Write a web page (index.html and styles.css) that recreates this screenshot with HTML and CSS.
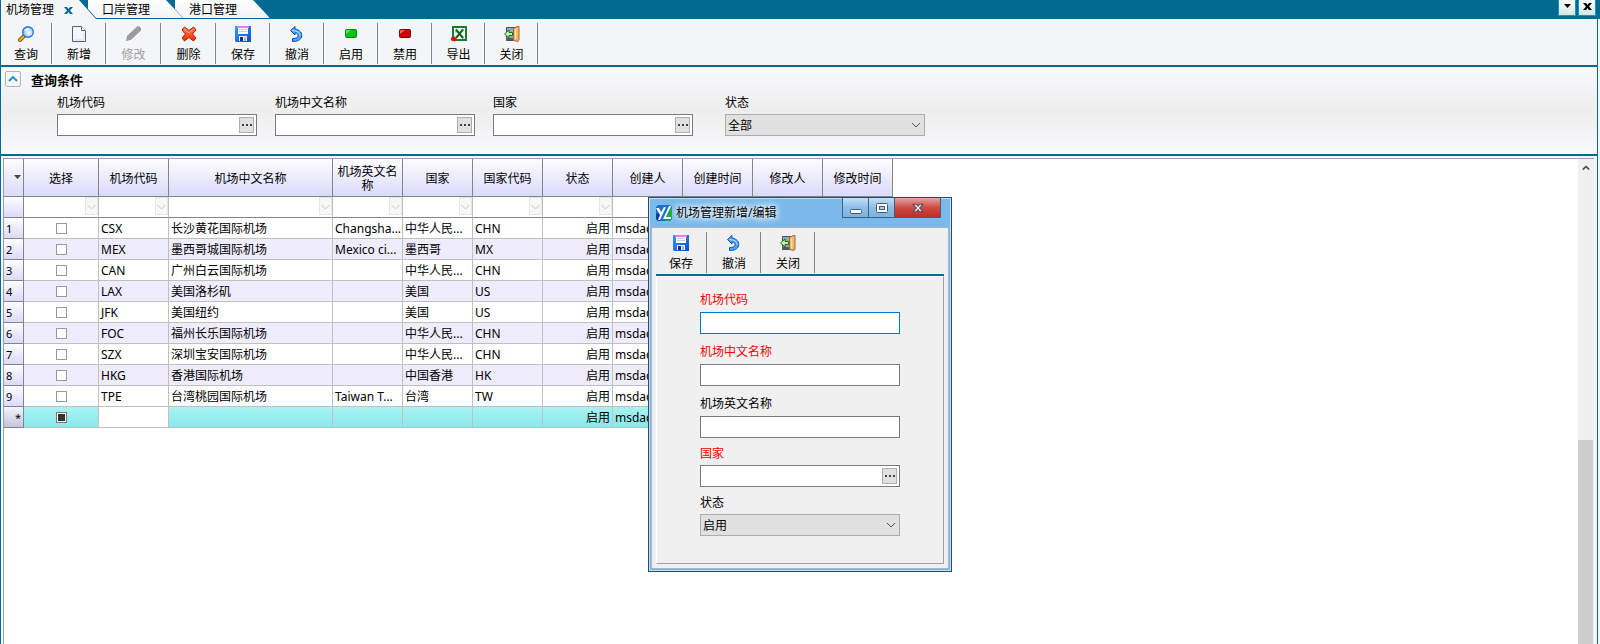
FILE: index.html
```html
<!DOCTYPE html>
<html lang="zh-CN">
  <head>
    <meta charset="UTF-8" />
    <meta name="viewport" content="width=device-width, initial-scale=1.0" />
    <title>机场管理</title>
    <link rel="stylesheet" href="styles.css">
  </head>
  <body>
    <!-- Shared icons -->
    <svg class="sprite" aria-hidden="true">
      <defs>
        <linearGradient id="blueFill" x1="0" y1="0" x2="1" y2="1">
          <stop offset="0" stop-color="#2f9bff" />
          <stop offset="1" stop-color="#0a4fd0" />
        </linearGradient>
        <linearGradient id="redFill" x1="0" y1="0" x2="0" y2="1">
          <stop offset="0" stop-color="#ff7a50" />
          <stop offset="1" stop-color="#f03000" />
        </linearGradient>
        <radialGradient id="lens" cx="0.6" cy="0.6" r="0.7">
          <stop offset="0" stop-color="#ffffff" />
          <stop offset="1" stop-color="#5cb4f4" />
        </radialGradient>
      </defs>
      <symbol id="icon-search" viewBox="0 0 16 16">
        <path d="M6.500 9.500L2 14" stroke="#8a6208" stroke-width="4" stroke-linecap="round" />
        <path d="M5.500 10.500L2 14" stroke="#e6b32e" stroke-width="2" stroke-linecap="round" />
        <circle cx="10" cy="6" r="5.300" fill="url(#lens)" stroke="#2a78d8" stroke-width="1.400" />
        <path d="M7 5c1-2 3-2 4-2" stroke="#fff" stroke-width="1.300" fill="none" />
      </symbol>
      <symbol id="icon-new" viewBox="0 0 16 16">
        <path d="M1.500.500h9l4 4v11h-13z" fill="#f3f6fd" stroke="#5a6070" />
        <path d="M10.500.500v4h4" fill="#fff" stroke="#5a6070" />
        <path d="M3 14h10V7" fill="none" stroke="#d8dfee" />
      </symbol>
      <symbol id="icon-edit" viewBox="0 0 16 16">
        <path d="M1 16l1-5 10-10c2-1 4 1 4 4L6 15z" fill="#fff" />
        <path d="M0 15l1-5L11 .500c2-1 5 1 4 4L5 14z" fill="#9c9c9c" />
      </symbol>
      <symbol id="icon-delete" viewBox="0 0 16 16">
        <path d="M3.500 1L8 4.500 12.500 1l2.500 3-3.500 4 3.500 4-2.500 3L8 11.500 3.500 15 1 12l3.500-4L1 4z" fill="url(#redFill)" stroke="#b01800" stroke-linejoin="round" />
        <path d="M3.500 3.500L8 7l4-3.500" stroke="#ffb090" fill="none" />
      </symbol>
      <symbol id="icon-save" viewBox="0 0 16 16">
        <path d="M0 0h16v16H1l-1-1z" fill="url(#blueFill)" />
        <path d="M3 0h10v8H3z" fill="#fff" />
        <path d="M2 0h12v2H2z" fill="#e47af4" />
        <path d="M4 3.500h8M4 5.500h8" stroke="#c4cee0" />
        <path d="M4 10h8v5H4z" fill="#eaf1fc" />
        <path d="M5 11h3v4H5z" fill="#0b2f8c" />
        <path d="M9 11h2v4H9z" fill="#a9b8d0" />
      </symbol>
      <symbol id="icon-undo" viewBox="0 0 16 16">
        <path d="M1.500 4.500L6 .500v2.500c5 1 7.500 4 6.500 8-1 3-4 4.500-9 4.500v-3c4 0 5.500-1 5.500-3s-1-2.500-3-2.500v2z" fill="#4ea6fa" stroke="#0a4fc4" stroke-linejoin="round" />
        <path d="M3.500 4.500c5 .5 7.500 2 7.500 5" fill="none" stroke="#c4e8ff" />
      </symbol>
      <symbol id="icon-enable" viewBox="0 0 16 16">
        <rect x="2.500" y="3.500" width="11" height="8" rx="1" fill="#00c410" stroke="#008a08" />
        <path d="M3 8l5-4H4L3 5z" fill="#5ae860" />
      </symbol>
      <symbol id="icon-disable" viewBox="0 0 16 16">
        <rect x="2.500" y="3.500" width="11" height="8" rx="1" fill="#cc0404" stroke="#860000" />
        <path d="M3 8l5-4H4L3 5z" fill="#f86060" />
      </symbol>
      <symbol id="icon-export" viewBox="0 0 16 16">
        <path d="M2 1h13v13H2z" fill="#f4faf4" stroke="#1c7a34" stroke-width="2" />
        <path d="M4 4h2M4 6h2M11 12h2M11 4h2" stroke="#7ab886" />
        <path d="M5 3.500l7 8.500M12 3.500L5 12" stroke="#146428" stroke-width="2" />
        <path d="M0 11.500h3V10l3 3-3 3v-1.500H0z" fill="#f00" />
      </symbol>
      <symbol id="icon-exit" viewBox="0 0 16 16">
        <path d="M2.500 1.500h9v13h-9z" fill="#8faabb" stroke="#4a5058" />
        <path d="M2 12h8v2H2z" fill="#505c66" />
        <path d="M9.500 2.500l5-2.500.500 1v13l-1 1.500-4.500-1z" fill="#f2b878" stroke="#a86824" />
        <path d="M11.500 3v10" stroke="#ffe0b8" />
        <path d="M12 7h1v3h-1z" fill="#ffd800" />
        <path d="M.500 8L5 4v2.500h3.500v3H5V12z" fill="#c8f4b8" stroke="#187018" />
      </symbol>
      <symbol id="icon-chevron-up" viewBox="0 0 10 6">
        <path d="M1 5l4-4 4 4" fill="none" stroke="currentColor" stroke-width="2" />
      </symbol>
      <symbol id="icon-x" viewBox="0 0 9 7">
        <path d="M0 0h3l1.500 2L6 0h3L6 3.500 9 7H6L4.500 5 3 7H0l3-3.500z" fill="currentColor" />
      </symbol>
      <symbol id="icon-caret" viewBox="0 0 7 4">
        <path d="M0 0h7L3.500 4z" fill="currentColor" />
      </symbol>
      <symbol id="icon-logo" viewBox="0 0 16 16">
        <path d="M2 0h12l2 2v12l-2 2H2l-2-2V2z" fill="#1472d0" />
        <path d="M14 1l2 1v12l-2 2H9z" fill="#1fa04a" />
        <path d="M0 9l5-2-1 9H2l-2-2z" fill="#0a3f94" />
        <path d="M0 3h3l2 4 3-5h2L4 15H2l2-5z" fill="#fff" />
        <path d="M13 1h2L10 12h5v2H7z" fill="#fff" />
      </symbol>
    </svg>

    <div class="tab-bar">
      <div class="tabs">
        <div class="tab active">
          <button type="button" class="tab-name">机场管理</button>
          <button type="button" class="tab-close" aria-label="关闭标签"><svg width="9" height="7"><use href="#icon-x" /></svg></button>
        </div>
        <div class="tab second"><button type="button" class="tab-name">口岸管理</button></div>
        <div class="tab third"><button type="button" class="tab-name">港口管理</button></div>
      </div>
      <div class="tab-tools">
        <button type="button" aria-label="标签列表"><svg width="7" height="4"><use href="#icon-caret" /></svg></button>
        <button type="button" aria-label="关闭"><svg width="9" height="7"><use href="#icon-x" /></svg></button>
      </div>
    </div>

    <main class="page">
      <div class="toolbar">
        <button type="button"><svg width="16" height="16"><use href="#icon-search" /></svg>查询</button>
        <button type="button"><svg width="16" height="16"><use href="#icon-new" /></svg>新增</button>
        <button type="button" class="wide" disabled><svg width="16" height="16"><use href="#icon-edit" /></svg>修改</button>
        <button type="button" class="wide"><svg width="16" height="16"><use href="#icon-delete" /></svg>删除</button>
        <button type="button"><svg width="16" height="16"><use href="#icon-save" /></svg>保存</button>
        <button type="button"><svg width="16" height="16"><use href="#icon-undo" /></svg>撤消</button>
        <button type="button"><svg width="16" height="16"><use href="#icon-enable" /></svg>启用</button>
        <button type="button"><svg width="16" height="16"><use href="#icon-disable" /></svg>禁用</button>
        <button type="button" class="narrow"><svg width="16" height="16"><use href="#icon-export" /></svg>导出</button>
        <button type="button" class="narrow"><svg width="16" height="16"><use href="#icon-exit" /></svg>关闭</button>
      </div>

      <section class="query">
        <div class="query-head">
          <button type="button" class="collapse" aria-label="收起"><svg width="10" height="6"><use href="#icon-chevron-up" /></svg></button>
          <h2>查询条件</h2>
        </div>
        <div class="query-fields">
          <div class="field">
            <label for="qCode">机场代码</label>
            <div class="lookup"><input type="text" id="qCode"><button type="button" aria-label="选择机场代码"></button></div>
          </div>
          <div class="field">
            <label for="qName">机场中文名称</label>
            <div class="lookup"><input type="text" id="qName"><button type="button" aria-label="选择机场中文名称"></button></div>
          </div>
          <div class="field">
            <label for="qCountry">国家</label>
            <div class="lookup"><input type="text" id="qCountry"><button type="button" aria-label="选择国家"></button></div>
          </div>
          <div class="field status">
            <label for="qStatus">状态</label>
            <select id="qStatus"><option>全部</option></select>
          </div>
        </div>
      </section>

      <section class="grid">
        <div class="grid-body">
          <table>
            <colgroup>
              <col class="col-num"><col class="col-check"><col class="col"><col class="col-name">
              <col class="col"><col class="col"><col class="col"><col class="col">
              <col class="col"><col class="col"><col class="col"><col class="col">
            </colgroup>
            <thead>
              <tr>
                <th class="corner"><svg width="7" height="4"><use href="#icon-caret" /></svg></th>
                <th>选择</th><th>机场代码</th><th>机场中文名称</th><th>机场英文名称</th><th>国家</th><th>国家代码</th>
                <th>状态</th><th>创建人</th><th>创建时间</th><th>修改人</th><th>修改时间</th>
              </tr>
              <tr class="filters">
                <th></th>
                <td><select aria-label="筛选选择"></select></td>
                <td><select aria-label="筛选机场代码"></select></td>
                <td><select aria-label="筛选机场中文名称"></select></td>
                <td><select aria-label="筛选机场英文名称"></select></td>
                <td><select aria-label="筛选国家"></select></td>
                <td><select aria-label="筛选国家代码"></select></td>
                <td><select aria-label="筛选状态"></select></td>
                <td><select aria-label="筛选创建人"></select></td>
                <td><select aria-label="筛选创建时间"></select></td>
                <td><select aria-label="筛选修改人"></select></td>
                <td class="last"></td>
              </tr>
            </thead>
            <tbody>
              <tr><th>1</th><td class="check"><input type="checkbox" aria-label="选择 CSX"></td><td>CSX</td><td>长沙黄花国际机场</td><td>Changsha...</td><td>中华人民...</td><td>CHN</td><td class="right">启用</td><td>msdad</td><td></td><td></td><td></td></tr>
              <tr><th>2</th><td class="check"><input type="checkbox" aria-label="选择 MEX"></td><td>MEX</td><td>墨西哥城国际机场</td><td>Mexico ci...</td><td>墨西哥</td><td>MX</td><td class="right">启用</td><td>msdad</td><td></td><td></td><td></td></tr>
              <tr><th>3</th><td class="check"><input type="checkbox" aria-label="选择 CAN"></td><td>CAN</td><td>广州白云国际机场</td><td></td><td>中华人民...</td><td>CHN</td><td class="right">启用</td><td>msdad</td><td></td><td></td><td></td></tr>
              <tr><th>4</th><td class="check"><input type="checkbox" aria-label="选择 LAX"></td><td>LAX</td><td>美国洛杉矶</td><td></td><td>美国</td><td>US</td><td class="right">启用</td><td>msdad</td><td></td><td></td><td></td></tr>
              <tr><th>5</th><td class="check"><input type="checkbox" aria-label="选择 JFK"></td><td>JFK</td><td>美国纽约</td><td></td><td>美国</td><td>US</td><td class="right">启用</td><td>msdad</td><td></td><td></td><td></td></tr>
              <tr><th>6</th><td class="check"><input type="checkbox" aria-label="选择 FOC"></td><td>FOC</td><td>福州长乐国际机场</td><td></td><td>中华人民...</td><td>CHN</td><td class="right">启用</td><td>msdad</td><td></td><td></td><td></td></tr>
              <tr><th>7</th><td class="check"><input type="checkbox" aria-label="选择 SZX"></td><td>SZX</td><td>深圳宝安国际机场</td><td></td><td>中华人民...</td><td>CHN</td><td class="right">启用</td><td>msdad</td><td></td><td></td><td></td></tr>
              <tr><th>8</th><td class="check"><input type="checkbox" aria-label="选择 HKG"></td><td>HKG</td><td>香港国际机场</td><td></td><td>中国香港</td><td>HK</td><td class="right">启用</td><td>msdad</td><td></td><td></td><td></td></tr>
              <tr><th>9</th><td class="check"><input type="checkbox" aria-label="选择 TPE"></td><td>TPE</td><td>台湾桃园国际机场</td><td>Taiwan T...</td><td>台湾</td><td>TW</td><td class="right">启用</td><td>msdad</td><td></td><td></td><td></td></tr>
              <tr class="new-row"><th>*</th><td class="check"><input type="checkbox" aria-label="选择新行" checked></td><td class="current"></td><td></td><td></td><td></td><td></td><td class="right">启用</td><td>msdad</td><td></td><td></td><td></td></tr>
            </tbody>
          </table>
        </div>
        <div class="scrollbar">
          <button type="button" aria-label="向上滚动"><svg width="8" height="6" viewBox="0 0 10 6"><use href="#icon-chevron-up" /></svg></button>
          <div class="thumb"></div>
        </div>
      </section>
    </main>

    <div class="dialog" role="dialog" aria-labelledby="dialogTitle">
      <div class="dialog-title">
        <svg width="16" height="16"><use href="#icon-logo" /></svg>
        <h1 id="dialogTitle">机场管理新增/编辑</h1>
        <div class="window-buttons">
          <button type="button" aria-label="最小化"><svg width="12" height="12"><rect x="0.500" y="7.500" width="11" height="4" rx="1" fill="#fff" stroke="#4a5a70" /></svg></button>
          <button type="button" aria-label="最大化"><svg width="12" height="10"><rect x="0.500" y="0.500" width="11" height="9" rx="1" fill="#fff" stroke="#4a5a70" /><rect x="3.500" y="3.500" width="5" height="3" fill="#a4cdf0" stroke="#4a5a70" /></svg></button>
          <button type="button" class="close" aria-label="关闭窗口"><svg width="12" height="10" viewBox="-1 -1 11 9"><path d="M0 0h3l1.500 2L6 0h3L6 3.500 9 7H6L4.500 5 3 7H0l3-3.500z" fill="#fff" stroke="#5a4a58" /></svg></button>
        </div>
      </div>
      <div class="dialog-body">
        <div class="toolbar">
          <button type="button"><svg width="16" height="16"><use href="#icon-save" /></svg>保存</button>
          <button type="button"><svg width="16" height="16"><use href="#icon-undo" /></svg>撤消</button>
          <button type="button"><svg width="16" height="16"><use href="#icon-exit" /></svg>关闭</button>
        </div>
        <form class="form">
          <div class="field required">
            <label for="code">机场代码</label>
            <input type="text" id="code" class="text focused">
          </div>
          <div class="field required">
            <label for="nameCn">机场中文名称</label>
            <input type="text" id="nameCn" class="text">
          </div>
          <div class="field">
            <label for="nameEn">机场英文名称</label>
            <input type="text" id="nameEn" class="text">
          </div>
          <div class="field required compact">
            <label for="country">国家</label>
            <div class="lookup"><input type="text" id="country"><button type="button" aria-label="选择国家"></button></div>
          </div>
          <div class="field compact">
            <label for="status">状态</label>
            <select id="status"><option>启用</option></select>
          </div>
        </form>
      </div>
    </div>
  </body>
</html>
```
FILE: styles.css
```css
* {
  box-sizing: border-box;
}

body {
  margin: 0;
  height: 100vh;
  display: flex;
  flex-direction: column;
  overflow: hidden;
  background-color: #f4f5f7;
  color: #000;
}

body,
button,
input,
select {
  font-family: "Noto Sans", "Noto Sans CJK SC", sans-serif;
  font-size: 12px;
  line-height: 16px;
}

button {
  margin: 0;
  padding: 0;
  border: none;
  background: none;
  color: inherit;
}

svg {
  display: block;
  flex: none;
}

.sprite {
  position: absolute;
  width: 0;
  height: 0;
}

/* Tabs */
.tab-bar {
  display: flex;
  justify-content: space-between;
  flex: none;
  height: 19px;
  padding-left: 1px;
  background-color: #006a93;
}

.tabs {
  display: flex;
}

.tab {
  position: relative;
  display: flex;
  align-items: center;
  width: 96px;
  height: 19px;
  padding: 1px 0 0 14px;
  background-color: #006a93;
  clip-path: polygon(0 0, calc(100% - 17px) 0, 100% 100%, 0 100%);
}

.tab::before {
  content: "";
  position: absolute;
  inset: 0 1px 1px 0;
  background: linear-gradient(#fff, #f0f2f4);
  clip-path: polygon(0 0, calc(100% - 17px) 0, 100% 100%, 0 100%);
}

.tab + .tab {
  margin-left: -9px;
}

.tab.active {
  z-index: 3;
  padding-left: 5px;
  gap: 10px;
}

.tab.active::before {
  bottom: 0;
  background: #f4f5f7;
}

.tab.second {
  z-index: 2;
}

.tab.third {
  z-index: 1;
}

.tab button {
  position: relative;
}

.tab-close {
  color: #006a93;
}

.tab-tools {
  display: flex;
  gap: 2px;
  padding-right: 4px;
}

.tab-tools button {
  display: flex;
  align-items: center;
  justify-content: center;
  width: 18px;
  height: 16px;
  padding-bottom: 3px;
  border: 1px solid #0098d0;
  border-top: none;
  background: linear-gradient(#fff, #d2e8dc);
}

.page {
  flex: 1;
  display: flex;
  flex-direction: column;
  min-height: 0;
  margin-right: 2px;
  border: solid #006a93;
  border-width: 0 1px;
}

/* Toolbar */
.toolbar {
  display: flex;
  flex: none;
  height: 48px;
  padding: 4px 0 1px;
  border-bottom: 2px solid #006a93;
}

.toolbar button {
  display: flex;
  flex-direction: column;
  align-items: center;
  gap: 5px;
  width: 54px;
  padding: 3px 0 0 1px;
  border-right: 1px solid #858585;
}

.toolbar button:first-child {
  width: 51px;
  padding-left: 0;
}

.toolbar .wide {
  width: 55px;
}

.toolbar .narrow {
  width: 53px;
}

.toolbar button:disabled {
  color: #a0a0a0;
}

/* Query panel */
.query {
  flex: none;
  height: 89px;
  padding: 4px;
  border-bottom: 2px solid #006a93;
  background: linear-gradient(#f8f9fd, #eee 50%, #f8f9fd);
}

.query-head {
  display: flex;
  align-items: flex-start;
  gap: 10px;
}

.query-head h2 {
  margin: 1px 0 0;
  font-size: 13px;
  line-height: 16px;
}

.collapse {
  display: flex;
  align-items: center;
  justify-content: center;
  width: 16px;
  height: 16px;
  border: 1px solid #b4b4b4;
  border-radius: 2px;
  color: #2a90d0;
}

.query-fields {
  display: flex;
  gap: 18px;
  padding: 7px 52px 0;
}

.query-fields .field {
  flex: 0 1 200px;
  gap: 3px;
}

.query-fields .status {
  margin-left: 14px;
}

.field {
  display: flex;
  flex-direction: column;
  gap: 4px;
}

.field label {
  height: 16px;
}

.text,
.lookup,
.field select {
  width: 100%;
  height: 22px;
  border: 1px solid #7a7a7a;
  background-color: #fff;
}

.text:focus,
.text.focused {
  outline: none;
  border-color: #0078d7;
}

.lookup {
  display: flex;
  align-items: center;
  padding-right: 2px;
}

.lookup input {
  flex: 1;
  min-width: 0;
  height: 100%;
  border: none;
  outline: none;
  background: none;
}

.lookup button {
  width: 15px;
  height: 16px;
  border: 1px solid #adadad;
  background: #e1e1e1 url("data:image/svg+xml,%3Csvg xmlns='http://www.w3.org/2000/svg' width='10' height='2'%3E%3Cpath d='M0 0h2v2H0zM4 0h2v2H4zM8 0h2v2H8z' fill='%23444'/%3E%3C/svg%3E") no-repeat center;
}

.field select {
  appearance: none;
  padding: 2px 20px 0 2px;
  border-color: #adadad;
  border-radius: 0;
  background: #e1e1e1 url("data:image/svg+xml,%3Csvg xmlns='http://www.w3.org/2000/svg' width='10' height='6'%3E%3Cpath d='M1 1l4 4 4-4' fill='none' stroke='%23555'/%3E%3C/svg%3E") no-repeat right 3px center;
  color: #000;
}

/* Grid */
.grid {
  flex: 1;
  display: flex;
  min-height: 0;
  margin: 2px 3px 0 2px;
  border: solid #a0a0a0;
  border-width: 1px 0 0 1px;
}

.grid-body {
  flex: 1;
  min-width: 0;
  overflow: hidden;
  background-color: #fff;
}

table {
  width: 889px;
  table-layout: fixed;
  border-collapse: separate;
  border-spacing: 0;
}

.col-num {
  width: 20px;
}

.col-check {
  width: 75px;
}

.col {
  width: 70px;
}

.col-name {
  width: 164px;
}

th {
  height: 21px;
  padding: 2px 2px 0;
  border: solid #858585;
  border-width: 0 1px 1px 0;
  background: linear-gradient(#fdfdff, #dadafc);
  font-weight: normal;
}

thead tr:first-child th {
  height: 38px;
  line-height: 14px;
}

.corner svg {
  margin: 0 0 4px 8px;
  color: #444;
}

tbody th {
  font-size: 11px;
  text-align: left;
}

td {
  height: 21px;
  padding: 2px 2px 0;
  border: solid #c0c0c0;
  border-width: 0 1px 1px 0;
  line-height: 16px;
  overflow: hidden;
  white-space: nowrap;
}

tbody tr:nth-child(even) td {
  background-color: #eeecfd;
}

.filters td {
  padding: 0;
  border-bottom-color: #858585;
  vertical-align: top;
}

.filters select {
  display: block;
  appearance: none;
  width: 100%;
  height: 18px;
  border: none;
  background: #fff url("data:image/svg+xml,%3Csvg xmlns='http://www.w3.org/2000/svg' width='13' height='18'%3E%3Crect x='.5' y='.5' width='12' height='17' fill='%23f7f7f7' stroke='%23e6e6e6'/%3E%3Cpath d='M2.500 8l4 4 4-4' fill='none' stroke='%23c8c8c8'/%3E%3C/svg%3E") no-repeat right top;
}

td.right {
  text-align: right;
}

td.check {
  padding-top: 0;
}

.check input {
  appearance: none;
  display: block;
  width: 11px;
  height: 11px;
  margin: 0 auto;
  border: 1px solid #999;
  background-color: #fff;
}

.check input:checked {
  border-color: #777;
  background-color: #333;
  box-shadow: inset 0 0 0 1px #fff;
}

tbody .new-row th {
  background: linear-gradient(#f4f4fa, #c4c4e0);
  text-align: right;
}

tbody tr.new-row td {
  background: linear-gradient(#a8f2f2, #88eaea);
}

tbody tr.new-row td.current {
  background: #fff;
}

/* Scrollbar */
.scrollbar {
  display: flex;
  flex-direction: column;
  justify-content: space-between;
  width: 16px;
  padding-right: 1px;
  background-color: #f0f0f0;
}

.scrollbar button {
  display: flex;
  align-items: center;
  justify-content: center;
  height: 18px;
  color: #555;
}

.thumb {
  height: 42%;
  background-color: #cdcdcd;
}

/* Edit window */
.dialog {
  position: absolute;
  z-index: 10;
  left: 648px;
  top: 197px;
  width: 304px;
  padding: 0 2px 2px;
  border: 1px solid #2b4a63;
  background-color: #7ab9ea;
  box-shadow: inset 0 0 0 1px #bfe2fa;
}

.dialog-title {
  display: flex;
  align-items: center;
  gap: 4px;
  height: 29px;
  padding-left: 5px;
}

.dialog-title h1 {
  margin: 0;
  font-size: 12px;
  line-height: 16px;
  font-weight: normal;
  text-shadow: 0 0 4px #fff, 0 0 8px #fff, 0 0 10px #fff;
}

.window-buttons {
  display: flex;
  align-self: flex-start;
  margin-left: auto;
  margin-right: 8px;
  border: 1px solid #45607c;
  border-top: none;
}

.window-buttons button {
  display: flex;
  align-items: center;
  justify-content: center;
  width: 26px;
  height: 19px;
  border-right: 1px solid #45607c;
  background: linear-gradient(#c4e0f6, #8cbfe6 50%, #7ab4e2);
}

.window-buttons .close {
  width: 45px;
  border-right: none;
  background: linear-gradient(#e4a49c, #cc4c44 50%, #c02c24);
}

.dialog-body {
  padding: 0 4px 4px;
  border: 1px solid #a8b4be;
  background-color: #f0f0f0;
}

.form {
  display: flex;
  flex-direction: column;
  gap: 10px;
  padding: 15px 43px 27px;
  border: 1px solid #a0a0a0;
  border-top-color: #fff;
  border-left-color: #fff;
}

.compact {
  gap: 3px;
  margin-top: -2px;
}

.required label {
  color: #f00;
}
```
